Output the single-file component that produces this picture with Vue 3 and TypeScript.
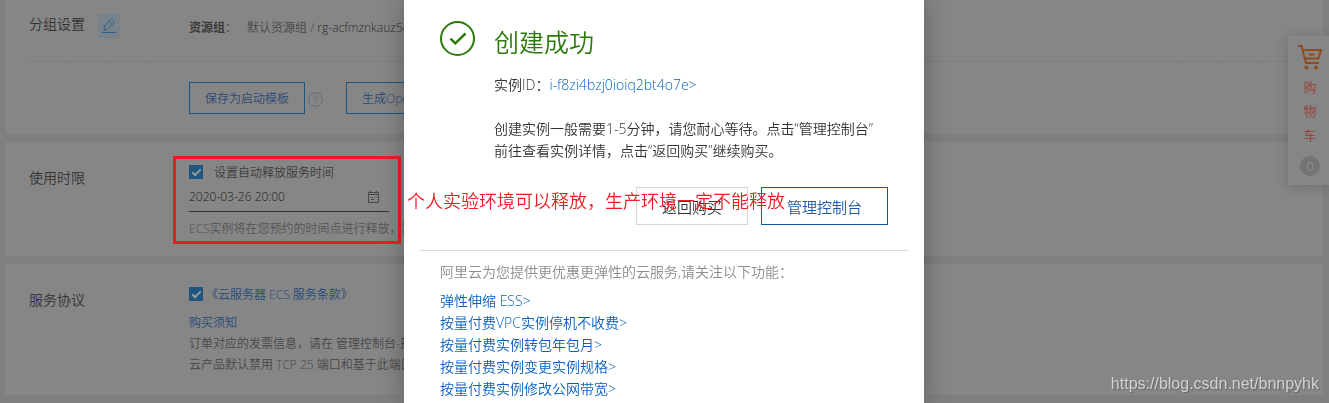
<script setup lang="ts">
import { ref } from 'vue'

const autoRelease = ref(true)
const agreed = ref(true)
const releaseTime = ref('2020-03-26 20:00')
const cartCount = ref(0)

const features: string[] = [
  '弹性伸缩 ESS>',
  '按量付费VPC实例停机不收费>',
  '按量付费实例转包年包月>',
  '按量付费实例变更实例规格>',
  '按量付费实例修改公网带宽>',
]
</script>

<template>
  <div class="page">
    <main class="cards">
      <section class="card group-card">
        <div class="row group-row">
          <h2 class="label">
            分组设置
            <button class="edit" type="button" aria-label="编辑">
              <svg width="14" height="16" viewBox="0 0 14 16" fill="none" stroke="currentColor" stroke-width="1">
                <path d="M2.500 8 8.500 1.800Q9.300 1 10.200 1.800L11.800 3.400Q12.500 4.200 11.800 5L5.500 11.300 2 12Z M7 3.500 10 6.500" />
                <path d="M0 14.500H14" />
              </svg>
            </button>
          </h2>
          <p class="resource"><b>资源组</b>：<span class="resource-name">默认资源组 / <em>rg-acfmznkauz5c</em></span></p>
        </div>
        <div class="row button-row">
          <span class="label"></span>
          <button class="ghost" type="button">保存为启动模板</button>
          <svg class="help" width="15" height="15" viewBox="0 0 15 15" fill="none" stroke="currentColor">
            <circle cx="7.500" cy="7.500" r="6.800" />
            <path d="M5.500 6V5.500Q5.800 3.800 7.500 3.800T9.500 5.500Q9.500 6.500 8.500 7.200T7.500 9M7.500 10V11.200" />
          </svg>
          <button class="ghost wide" type="button">生成Open</button>
        </div>
      </section>

      <section class="card release-card">
        <div class="row">
          <h2 class="label">使用时限</h2>
          <div class="content release">
            <label class="check release-check"><input v-model="autoRelease" type="checkbox" />设置自动释放服务时间</label>
            <div class="date">
              <input v-model="releaseTime" type="text" aria-label="释放时间" />
              <svg width="11" height="12" viewBox="0 0 11 12" fill="none" stroke="currentColor">
                <path d="M.5 1.500H10.500V11.500H.5ZM.5 3.500H10.500M2.500 0V2M8.500 0V2" />
                <path d="M2 6.500H9" stroke-dasharray="1 1" />
                <path d="M3 8.500H6" />
              </svg>
            </div>
            <p class="hint">ECS实例将在您预约的时间点进行释放，实</p>
            <div class="marker"></div>
          </div>
        </div>
      </section>

      <section class="card">
        <div class="row">
          <h2 class="label">服务协议</h2>
          <div class="content">
            <div class="check terms">
              <input id="terms" v-model="agreed" type="checkbox" aria-label="服务条款" />
              <a href="#">《云服务器 ECS 服务条款》</a>
            </div>
            <a class="notice" href="#">购买须知</a>
            <p>订单对应的发票信息，请在 管理控制台-费</p>
            <p>云产品默认禁用 TCP 25 端口和基于此端口</p>
          </div>
        </div>
      </section>
    </main>

    <aside class="cart">
      <svg width="24" height="25" viewBox="0 0 24 25" fill="none" stroke="currentColor" stroke-width="2">
        <path d="M0 1H3.500L8 18H21M4.500 5H23L20.500 13.500H7M10.500 9.500H16.500" />
        <circle cx="8.500" cy="22.500" r="2" fill="currentColor" stroke="none" />
        <circle cx="18" cy="22.500" r="2" fill="currentColor" stroke="none" />
      </svg>
      <span>购</span><span>物</span><span>车</span>
      <b class="count">{{ cartCount }}</b>
    </aside>

    <div class="overlay">
      <div class="dialog" role="dialog" aria-labelledby="dialog-title">
        <div class="result">
          <svg width="36" height="36" viewBox="0 0 36 36" fill="none" stroke="currentColor">
            <circle cx="17.500" cy="17.500" r="16.500" stroke-width="2" />
            <path d="M10.500 17.700 15.300 22.300 25.500 12.500" stroke-width="2.500" />
          </svg>
          <div class="message">
            <h1 id="dialog-title">创建成功</h1>
            <p class="instance">实例ID：<a href="#">i-f8zi4bzj0ioiq2bt4o7e&gt;</a></p>
            <p>创建实例一般需要1-5分钟，请您耐心等待。点击“管理控制台”<br />前往查看实例详情，点击“返回购买”继续购买。</p>
          </div>
        </div>
        <div class="actions">
          <button type="button">返回购买</button>
          <button class="primary" type="button">管理控制台</button>
          <span class="remark">个人实验环境可以释放，生产环境一定不能释放</span>
        </div>
        <div class="more">
          <p>阿里云为您提供更优惠更弹性的云服务,请关注以下功能：</p>
          <ul>
            <li v-for="item in features" :key="item"><a href="#">{{ item }}</a></li>
          </ul>
        </div>
      </div>
    </div>

    <span class="watermark">https://blog.csdn.net/bnnpyhk</span>
  </div>
</template>

<style>
body {
  margin: 0;
  overflow: hidden;
  background: #7f7f82;
}
</style>

<style scoped>
.page {
  font: 350 12px/20px "Open Sans", "Noto Sans CJK SC", sans-serif;
  color: #464646;
}
h1, h2, p, ul { margin: 0; padding: 0; font-weight: inherit; }
ul { list-style: none; }
a { color: #254b7b; text-decoration: none; }
button { font: inherit; cursor: pointer; }
.cards {
  display: flex;
  flex-direction: column;
  gap: 8px;
  padding: 0 6px 8px 5px;
}
.card {
  box-sizing: border-box;
  padding: 24px 24px 20px;
  background: #868686;
}
.group-card { padding-top: 14px; }
.release-card { padding-bottom: 17px; }
.row { display: flex; align-items: flex-start; }
.label {
  flex: none;
  display: flex;
  align-items: flex-start;
  gap: 13px;
  width: 160px;
  font-size: 14px;
  line-height: 24px;
  color: #333;
}
.edit {
  display: flex;
  align-items: center;
  justify-content: center;
  width: 22px;
  height: 24px;
  padding: 0;
  border: 0;
  border-radius: 2px;
  background: #78828b;
  color: #2f5d88;
}
.group-row { height: 47px; border-bottom: 1px dashed #7a7a7a; }
.group-row .label { line-height: 20px; }
.resource { padding-top: 4px; }
.resource b { font-weight: 700; color: #3a3a3a; }
.resource-name { padding-left: 10px; }
.resource em { font-style: normal; color: #2e2e2e; }
.button-row { align-items: center; padding-top: 20px; }
.ghost {
  height: 32px;
  padding: 2px 15px 0;
  border: 1px solid #1f5680;
  background: transparent;
  color: #2d4a76;
}
.wide { min-width: 160px; text-align: left; }
.help { margin: 2px 23px 0 3px; color: #6b6b6b; }
.content { position: relative; color: #484848; line-height: 21px; }
.release { width: 216px; white-space: nowrap; }
.check { display: flex; align-items: center; height: 20px; }
.release-check { gap: 11px; margin-top: -4px; color: #3c3c3c; }
.check input {
  appearance: none;
  width: 14px;
  height: 14px;
  margin: 0;
  background: #1f5680;
  display: grid;
  place-items: center;
}
.check input:checked::before {
  content: "";
  width: 7px;
  height: 3px;
  border: solid #999;
  border-width: 0 0 2px 2px;
  transform: translateY(-1px) rotate(-45deg);
}
.date {
  display: flex;
  align-items: center;
  justify-content: space-between;
  box-sizing: border-box;
  width: 200px;
  height: 30px;
  padding-right: 10px;
  border-bottom: 1px solid #333;
  color: #484848;
}
.date input {
  width: 140px;
  padding: 0;
  border: 0;
  outline: 0;
  background: transparent;
  font: inherit;
  color: #202020;
}
.hint { padding-top: 6px; color: #545454; }
.marker {
  position: absolute;
  inset: -10px 4px -5px -16px;
  border: 3px solid #ed1c24;
}
.terms { gap: 3px; margin-top: -4px; margin-bottom: 8px; }
.notice { display: block; }
.cart {
  position: absolute;
  top: 36px;
  right: 0;
  display: flex;
  flex-direction: column;
  align-items: center;
  box-sizing: border-box;
  width: 41px;
  padding: 9px 0;
  background: #868686;
  box-shadow: 0 2px 12px rgba(0, 0, 0, 0.18);
  color: #904a1f;
  font-size: 13px;
  line-height: 24px;
}
.cart svg { margin-bottom: 5px; margin-left: 3px; }
.cart span, .count { margin-left: 3px; color: #98402e; }
.cart .count {
  width: 20px;
  margin-top: 9px;
  border-radius: 50%;
  background: #747474;
  color: #8d8d8d;
  font-weight: 400;
  line-height: 20px;
  text-align: center;
}
.overlay {
  position: fixed;
  inset: 0;
  display: flex;
  justify-content: center;
  padding-right: 1px;
}
.dialog {
  box-sizing: border-box;
  width: 520px;
  padding: 21px 16px 0;
  background: #fff;
  box-shadow: 0 0 24px rgba(0, 0, 0, 0.3);
  font-size: 14px;
  line-height: 22px;
  color: #333;
}
.dialog a { color: #0860c0; }
.result { display: flex; gap: 18px; padding: 0 20px; color: #2b7a0b; }
.result svg { flex: none; }
.message { color: #333; white-space: nowrap; }
.message h1 { padding-top: 4px; font-size: 25px; line-height: 34px; color: #2b7a0b; }
.instance { margin: 15px 0 22px; }
.actions {
  position: relative;
  display: flex;
  justify-content: flex-end;
  gap: 13px;
  padding: 25px 20px;
  border-bottom: 1px solid #d9d9d9;
}
.actions button {
  height: 38px;
  padding: 2px 25px 0;
  border: 1px solid #d9d9d9;
  background: #fff;
  color: #333;
  font-size: 15px;
}
.actions .primary { border-color: #0b5cad; color: #1d58a0; }
.remark {
  position: absolute;
  top: 27px;
  left: -13px;
  font-size: 18px;
  line-height: 24px;
  white-space: nowrap;
  color: #ed1c24;
}
.more { padding: 10px 20px; color: #8c8c8c; }
.more ul { padding-top: 7px; }
.watermark {
  position: fixed;
  right: 10px;
  bottom: 9px;
  font: 16px/20px "Liberation Sans", Arial, sans-serif;
  color: #d2d2d2;
  text-shadow: 1px 1px 1px #666;
}
</style>
